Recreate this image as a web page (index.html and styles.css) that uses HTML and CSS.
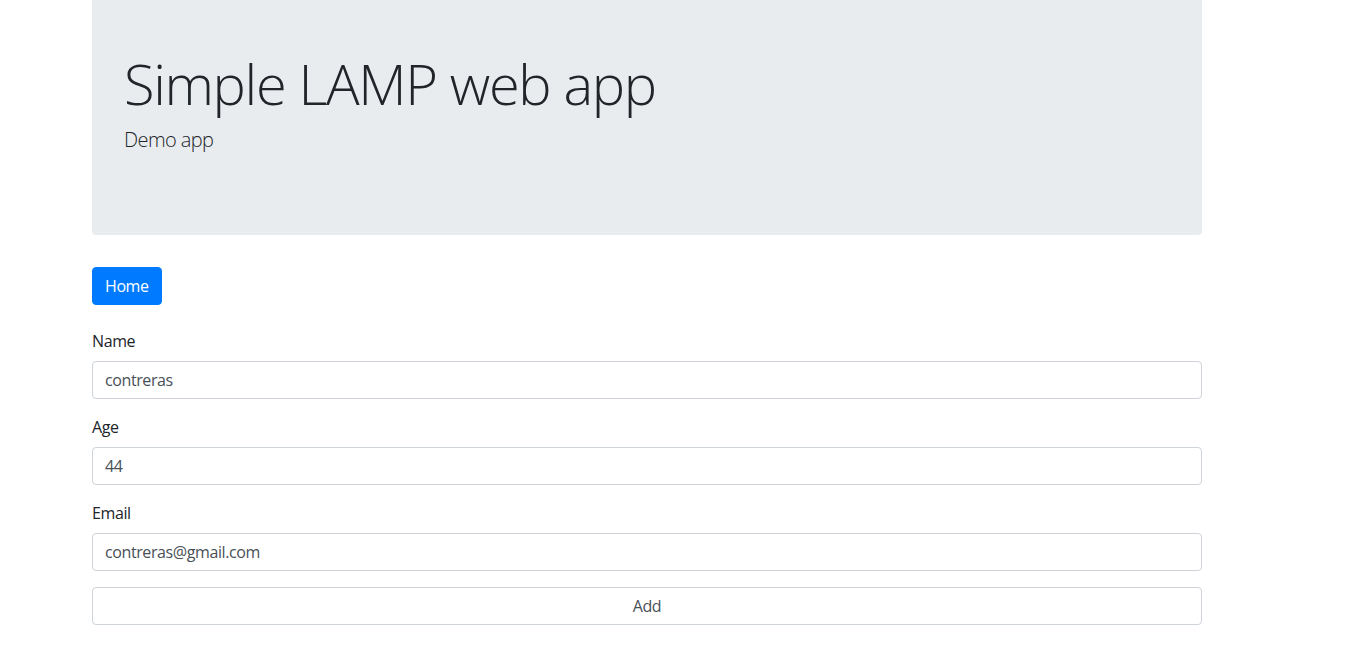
FILE: index.html
```html
<!DOCTYPE html>
<html lang="en">
<head>
<meta charset="utf-8">
<title>Simple LAMP web app</title>
<link rel="stylesheet" href="styles.css">
</head>
<body>
<div class="container">
  <div class="jumbotron">
    <h1 class="display">Simple LAMP web app</h1>
    <p class="lead">Demo app</p>
  </div>
  <div class="nav">
    <a class="btn-primary" href="#">Home</a>
  </div>
  <form class="form">
    <div class="form-group">
      <label class="label" for="name">Name</label>
      <input class="form-control" id="name" type="text" value="contreras">
    </div>
    <div class="form-group">
      <label class="label" for="age">Age</label>
      <input class="form-control" id="age" type="text" value="44">
    </div>
    <div class="form-group">
      <label class="label" for="email">Email</label>
      <input class="form-control" id="email" type="text" value="contreras@gmail.com">
    </div>
    <button class="form-control submit" type="button">Add</button>
  </form>
</div>
</body>
</html>
```
FILE: styles.css
```css
* { box-sizing: border-box; }
html, body { margin: 0; padding: 0; }
body {
  font-family: "Open Sans", "Noto Sans", Arial, sans-serif;
  font-size: 16px;
  line-height: 1.5;
  letter-spacing: -0.4px;
  color: #212529;
  background: #fff;
}
.container {
  width: 1110px;
  margin-left: 92px;
  margin-top: -14px;
}
.jumbotron {
  background: #e9ecef;
  border-radius: 4px;
  padding: 64px 32px;
  margin-bottom: 32px;
}
.display {
  margin: 0 0 8px;
  font-size: 56px;
  font-weight: 300;
  line-height: 1.2;
  letter-spacing: -1.35px;
}
.lead {
  margin: 0 0 16px;
  font-size: 20px;
  font-weight: 300;
  line-height: 1.5;
  letter-spacing: -0.6px;
}
.nav {
  display: flex;
  margin-bottom: 24px;
}
.btn-primary {
  display: inline-block;
  background: #007bff;
  color: #fff;
  text-decoration: none;
  padding: 6px 12px;
  border-radius: 4px;
  border: 1px solid #007bff;
  line-height: 24px;
  font-size: 16px;
}
.form-group { margin-bottom: 16px; }
.label {
  display: inline-block;
  margin-bottom: 8px;
}
.form-control {
  display: block;
  width: 100%;
  height: 38px;
  padding: 6px 12px;
  font-family: inherit;
  font-size: 16px;
  line-height: 24px;
  letter-spacing: -0.4px;
  color: #495057;
  background: #fff;
  border: 1px solid #ced4da;
  border-radius: 4px;
}
.submit {
  text-align: center;
  cursor: pointer;
}
```
